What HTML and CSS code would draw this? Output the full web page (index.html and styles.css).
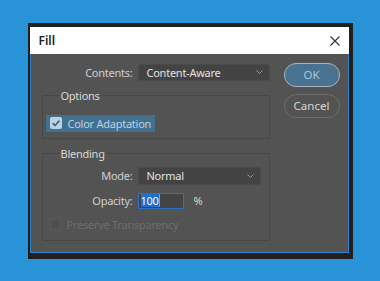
FILE: index.html
```html
<!DOCTYPE html>
<html>
	<head>
		<meta charset="utf-8" />
		<title>Fill</title>
		<link rel="stylesheet" href="styles.css">
	</head>
	<body>
		<div class="frame">
			<div class="window">
				<div class="titlebar">
					<span class="title">Fill</span>
					<svg class="close" width="10" height="10" viewBox="0 0 10 10">
						<path d="M0.5 0.5 L9.5 9.5 M9.5 0.5 L0.5 9.5" stroke="#333" stroke-width="1.1" fill="none"/>
					</svg>
				</div>
				<div class="content">
					<div class="main">
						<div class="row">
							<label class="label label-wide">Contents:</label>
							<div class="select select-wide">
								<span>Content-Aware</span>
								<svg class="chevron" width="7" height="4" viewBox="0 0 7 4"><path d="M0.5 0.5 L3.5 3.5 L6.5 0.5" stroke="#9a9a9a" fill="none"/></svg>
							</div>
						</div>

						<fieldset class="group group-options">
							<legend>Options</legend>
							<div class="check-row active">
								<span class="checkbox checked">
									<svg width="12" height="12" viewBox="0 0 12 12"><path d="M2.6 6.2 L5 8.5 L9.4 3.6" stroke="#3f6b8b" stroke-width="1.8" fill="none"/></svg>
								</span>
								<span>Color Adaptation</span>
							</div>
						</fieldset>

						<fieldset class="group group-blending">
							<legend>Blending</legend>
							<div class="row row-mode">
								<label class="label">Mode:</label>
								<div class="select select-mode">
									<span>Normal</span>
									<svg class="chevron" width="7" height="4" viewBox="0 0 7 4"><path d="M0.5 0.5 L3.5 3.5 L6.5 0.5" stroke="#9a9a9a" fill="none"/></svg>
								</div>
							</div>
							<div class="row row-opacity">
								<label class="label">Opacity:</label>
								<div class="input"><span class="selected">100</span><span class="caret"></span></div>
								<span class="unit">%</span>
							</div>
							<div class="check-row disabled">
								<span class="checkbox"></span>
								<span>Preserve Transparency</span>
							</div>
						</fieldset>
					</div>

					<div class="buttons">
						<button class="btn btn-ok">OK</button>
						<button class="btn">Cancel</button>
					</div>
				</div>
			</div>
		</div>
	</body>
</html>
```

FILE: styles.css
```css
* {
	padding: 0px;
	margin: 0px;
	box-sizing: border-box;
}

body {
	background-color: #2893d7;
	height: 281px;
	display: flex;
	align-items: center;
	justify-content: center;
	font-family: "Noto Sans", "Open Sans", sans-serif;
	font-size: 11px;
	letter-spacing: -0.25px;
	color: #d4d4d4;
}

.frame {
	width: 325px;
	height: 236px;
	background: #1f1f1f;
	padding: 4px 4px 6px 2px;
}

.window {
	height: 226px;
	border: 1px solid #2f82c9;
	border-top: none;
	background: #535353;
	display: flex;
	flex-direction: column;
}

.titlebar {
	height: 27px;
	background: #fff;
	display: flex;
	align-items: center;
	justify-content: space-between;
	padding: 0 9px 0 8px;
	margin-left: -1px;
	margin-right: -1px;
}

.title {
	color: #1e1e1e;
	font-weight: 600;
	font-size: 12px;
	letter-spacing: 0;
	padding-left: 1px;
}

.close {
	display: block;
	margin-top: 1px;
}

.content {
	display: flex;
	padding: 10px 8px 0 11px;
	gap: 14px;
}

.main {
	width: 228px;
}

.row {
	display: flex;
	align-items: center;
	gap: 5px;
	height: 17px;
}

.label {
	width: 87px;
	text-align: right;
	color: #cfcfcf;
}

.label-wide {
	width: 91px;
}

.select {
	height: 17px;
	background: #434343;
	border: 1px solid #4b4b4b;
	border-radius: 2px;
	display: flex;
	align-items: center;
	justify-content: space-between;
	padding: 0 6px 0 8px;
	color: #e2e2e2;
}

.select-wide {
	width: 132px;
}

.select-mode {
	width: 123px;
	height: 18px;
}

.chevron {
	display: block;
}

.group {
	border: 1px solid #484848;
	padding: 11px 3px 6px 3px;
}

.group legend {
	margin-left: 13px;
	padding: 0 2px;
	line-height: 16px;
	color: #d8d8d8;
}

.group-options {
	margin-top: 7px;
}

.group-blending {
	margin-top: 7px;
	padding-top: 5px;
	padding-bottom: 7px;
}

.row-mode {
	height: 18px;
}

.row-opacity {
	margin-top: 8px;
	height: 16px;
}

.input {
	width: 46px;
	height: 16px;
	background: #444;
	border: 1px solid #2b72c0;
	display: flex;
	align-items: center;
	padding-left: 2px;
}

.selected {
	background: #1d6fd1;
	color: #fff;
	line-height: 13px;
}

.caret {
	width: 1px;
	height: 13px;
	background: #d88a3a;
}

.unit {
	margin-left: 5px;
	color: #d8d8d8;
}

.check-row {
	display: flex;
	align-items: center;
	gap: 6px;
	height: 17px;
	padding: 0 4px 0 4px;
	white-space: nowrap;
}

.check-row.active {
	width: max-content;
	background: #42708f;
	color: #bcd3e3;
}

.checkbox {
	width: 12px;
	height: 12px;
	border-radius: 2px;
	display: block;
}

.checkbox svg {
	display: block;
}

.checkbox.checked {
	background: #bed2e0;
}

.check-row.disabled {
	margin-top: 8px;
	height: 16px;
	color: #6d6d6d;
}

.check-row.disabled .checkbox {
	width: 11px;
	height: 11px;
	background: #4f4f4f;
	border: 1px solid #5a5a5a;
}

.buttons {
	display: flex;
	flex-direction: column;
	gap: 7px;
}

.btn {
	width: 56px;
	height: 24px;
	border-radius: 12px;
	border: 1px solid #6e6e6e;
	background: #535353;
	color: #d6d6d6;
	font-family: "Noto Sans", "Open Sans", sans-serif;
	font-size: 11.5px;
}

.btn-ok {
	margin-top: -1px;
	background: #48728f;
	border: 1.5px solid #a9b6c0;
	color: #a8c5da;
}
```
